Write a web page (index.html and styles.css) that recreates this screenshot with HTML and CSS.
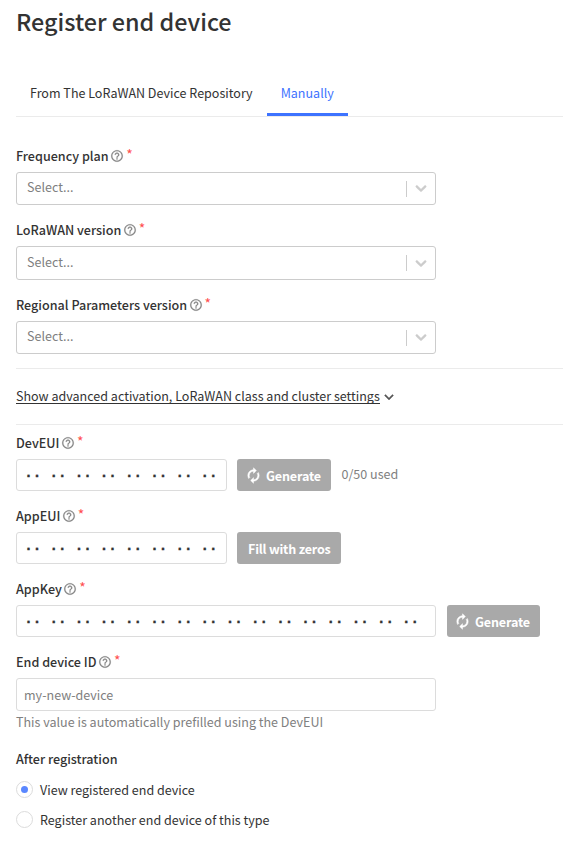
FILE: index.html
```html
<!DOCTYPE html>
<html lang="en">
<head>
<meta charset="utf-8">
<title>Register end device</title>
<link rel="stylesheet" href="styles.css">
</head>
<body>
<svg class="defs" width="0" height="0">
  <symbol id="help" viewBox="0 0 24 24"><path d="M11 18h2v-2h-2v2zm1-16C6.48 2 2 6.48 2 12s4.48 10 10 10 10-4.480 10-10S17.52 2 12 2zm0 18c-4.410 0-8-3.590-8-8s3.590-8 8-8 8 3.590 8 8-3.590 8-8 8zm0-14c-2.210 0-4 1.790-4 4h2c0-1.100.9-2 2-2s2 .9 2 2c0 2-3 1.750-3 5h2c0-2.250 3-2.500 3-5 0-2.210-1.790-4-4-4z"/></symbol>
  <symbol id="renew" viewBox="0 0 24 24"><path d="M12 6v3l4-4-4-4v3c-4.420 0-8 3.580-8 8 0 1.570.46 3.030 1.240 4.260L6.700 14.800c-.45-.83-.7-1.790-.7-2.800 0-3.310 2.690-6 6-6zm6.760 1.740L17.300 9.200c.44.84.7 1.790.7 2.800 0 3.310-2.690 6-6 6v-3l-4 4 4 4v-3c4.420 0 8-3.580 8-8 0-1.570-.46-3.030-1.240-4.260z"/></symbol>
  <symbol id="chevron" viewBox="0 0 20 20"><path d="M4.516 7.548c0.436-0.446 1.043-0.481 1.576 0l3.908 3.747 3.908-3.747c0.533-0.481 1.141-0.446 1.574 0 0.436 0.445 0.408 1.197 0 1.615-0.406 0.418-4.695 4.502-4.695 4.502-0.217 0.223-0.502 0.335-0.787 0.335s-0.570-0.112-0.789-0.335c0 0-4.287-4.084-4.695-4.502s-0.436-1.170 0-1.615z"/></symbol>
  <symbol id="expand" viewBox="0 0 24 24"><path d="M16.590 8.590L12 13.170 7.410 8.590 6 10l6 6 6-6z"/></symbol>
</svg>
<main class="page">
  <h1 class="title">Register end device</h1>
  <nav class="tabs">
    <a class="tab">From The LoRaWAN Device Repository</a>
    <a class="tab tab-active">Manually</a>
  </nav>

  <section class="selects">
    <div class="field">
      <div class="label"><span>Frequency plan</span><svg class="help"><use href="#help"/></svg><i class="req">*</i></div>
      <div class="select"><span class="value">Select...</span><span class="bar"></span><svg class="chevron"><use href="#chevron"/></svg></div>
    </div>
    <div class="field">
      <div class="label"><span>LoRaWAN version</span><svg class="help"><use href="#help"/></svg><i class="req">*</i></div>
      <div class="select select-tall"><span class="value">Select...</span><span class="bar"></span><svg class="chevron"><use href="#chevron"/></svg></div>
    </div>
    <div class="field">
      <div class="label"><span>Regional Parameters version</span><svg class="help"><use href="#help"/></svg><i class="req">*</i></div>
      <div class="select"><span class="value">Select...</span><span class="bar"></span><svg class="chevron"><use href="#chevron"/></svg></div>
    </div>
  </section>

  <div class="advanced"><span class="link">Show advanced activation, LoRaWAN class and cluster settings</span><svg class="expand"><use href="#expand"/></svg></div>

  <section class="inputs">
    <div class="field">
      <div class="label"><span>DevEUI</span><svg class="help"><use href="#help"/></svg><i class="req">*</i></div>
      <div class="row">
        <div class="input short"><b>··</b><b>··</b><b>··</b><b>··</b><b>··</b><b>··</b><b>··</b><b>··</b></div>
        <button class="button"><svg class="renew"><use href="#renew"/></svg><span>Generate</span></button>
        <span class="used">0/50 used</span>
      </div>
    </div>
    <div class="field">
      <div class="label"><span>AppEUI</span><svg class="help"><use href="#help"/></svg><i class="req">*</i></div>
      <div class="row">
        <div class="input short"><b>··</b><b>··</b><b>··</b><b>··</b><b>··</b><b>··</b><b>··</b><b>··</b></div>
        <button class="button fill"><span>Fill with zeros</span></button>
      </div>
    </div>
    <div class="field">
      <div class="label"><span>AppKey</span><svg class="help"><use href="#help"/></svg><i class="req">*</i></div>
      <div class="row row-key">
        <div class="input"><b>··</b><b>··</b><b>··</b><b>··</b><b>··</b><b>··</b><b>··</b><b>··</b><b>··</b><b>··</b><b>··</b><b>··</b><b>··</b><b>··</b><b>··</b><b>··</b></div>
        <button class="button key"><svg class="renew"><use href="#renew"/></svg><span>Generate</span></button>
      </div>
    </div>
    <div class="field">
      <div class="label"><span>End device ID</span><svg class="help"><use href="#help"/></svg><i class="req">*</i></div>
      <div class="input id"><span>my-new-device</span></div>
      <div class="hint">This value is automatically prefilled using the DevEUI</div>
    </div>
  </section>

  <section class="after">
    <div class="label">After registration</div>
    <div class="radio"><span class="circle checked"></span><span>View registered end device</span></div>
    <div class="radio"><span class="circle"></span><span>Register another end device of this type</span></div>
  </section>
</main>
</body>
</html>
```
FILE: styles.css
```css
* { box-sizing: border-box; }
body {
  margin: 0;
  background: #fff;
  color: #333;
  font: 400 12.54px/20px "Noto Sans CJK SC", "Noto Sans", sans-serif;
  white-space: nowrap;
  overflow: hidden;
}
.defs { display: block; }
svg { fill: currentColor; flex: none; }
.page { padding-left: 16px; height: 842px; }
.title {
  margin: 0;
  height: 70px;
  padding-top: 3px;
  font-size: 23.35px;
  line-height: 36px;
  font-weight: 500;
}
.tabs {
  display: flex;
  height: 47px;
  border-bottom: 1px solid #ebebeb;
}
.tab { height: 46px; padding: 13px 14px 0; }
.tab-active { color: #3d73ff; border-bottom: 3px solid #3d73ff; }

.selects { padding-top: 29px; height: 251px; }
.selects .field { height: 74px; }
.selects .field:nth-child(2) { height: 75px; }
.label {
  display: flex;
  align-items: center;
  height: 20px;
  font-size: 12.58px;
  font-weight: 500;
}
.help {
  width: 14px;
  height: 14px;
  margin-left: 1.5px;
  color: #868686;
  stroke: currentColor;
  stroke-width: .3px;
}
.req {
  margin: -5px 0 0 2px;
  font-size: 14px;
  font-style: normal;
  font-weight: 400;
  color: #ff4f4f;
}
.select {
  display: flex;
  align-items: center;
  width: 420px;
  height: 33px;
  margin-top: 6px;
  padding: 0 5px 0 10px;
  border: 1px solid #ccc;
  border-radius: 3px;
  color: #808080;
}
.select-tall { height: 34px; }
.value { flex: 1; margin-top: -3px; }
.bar { width: 1px; height: 16px; background: #ccc; }
.chevron {
  width: 18px;
  height: 18px;
  margin: -1px 0 0 5px;
  color: #ccc;
  stroke: currentColor;
  stroke-width: .5px;
}

.advanced {
  display: flex;
  align-items: center;
  height: 57px;
  border: solid #ebebeb;
  border-width: 1px 0;
}
.link { height: 16px; margin-top: -2px; line-height: 16px; border-bottom: 1px solid #333; }
.expand { width: 18px; height: 18px; color: #555; stroke: currentColor; stroke-width: .5px; }

.inputs { padding-top: 8px; height: 324px; }
.inputs .field { height: 73px; }
.row { display: flex; gap: 10px; margin-top: 6px; }
.row-key { gap: 11px; }
.input {
  display: flex;
  align-items: center;
  width: 420px;
  height: 32px;
  border: 1px solid #dcdcdc;
  border-radius: 3px;
  padding-left: 7px;
}
.short { width: 211px; }
.input b {
  width: 25.2px;
  padding-top: 3px;
  font: 700 15px/20px "Liberation Mono", monospace;
  letter-spacing: -0.5px;
  -webkit-text-stroke: .3px #333;
}
.id { height: 33px; margin-top: 6px; padding-left: 7px; color: #808080; }
.button {
  display: flex;
  align-items: center;
  width: 94px;
  height: 32px;
  padding: 2px 0 0 8px;
  border: 0;
  border-radius: 3px;
  background: #a9a9a9;
  color: #fff;
  font: inherit;
  font-weight: 700;
  letter-spacing: -.15px;
}
.key { width: 93px; padding-left: 7px; }
.fill { width: 104px; padding-left: 11px; letter-spacing: -.2px; }
.renew {
  width: 17px;
  height: 17px;
  margin: -2px 4px 0 0;
  stroke: currentColor;
  stroke-width: .7px;
}
.used { padding: 5px 0 0 .5px; color: #808080; }
.hint { margin-top: 1px; color: #808080; }

.after .label { margin-bottom: 6px; }
.radio { display: flex; align-items: center; height: 30px; gap: 7px; }
.circle {
  display: flex;
  width: 17px;
  height: 17px;
  margin-top: -2px;
  border: 1px solid #dcdcdc;
  border-radius: 50%;
}
.checked::before {
  content: "";
  width: 7px;
  height: 7px;
  margin: auto;
  border-radius: 50%;
  background: #5a87ff;
}
```
